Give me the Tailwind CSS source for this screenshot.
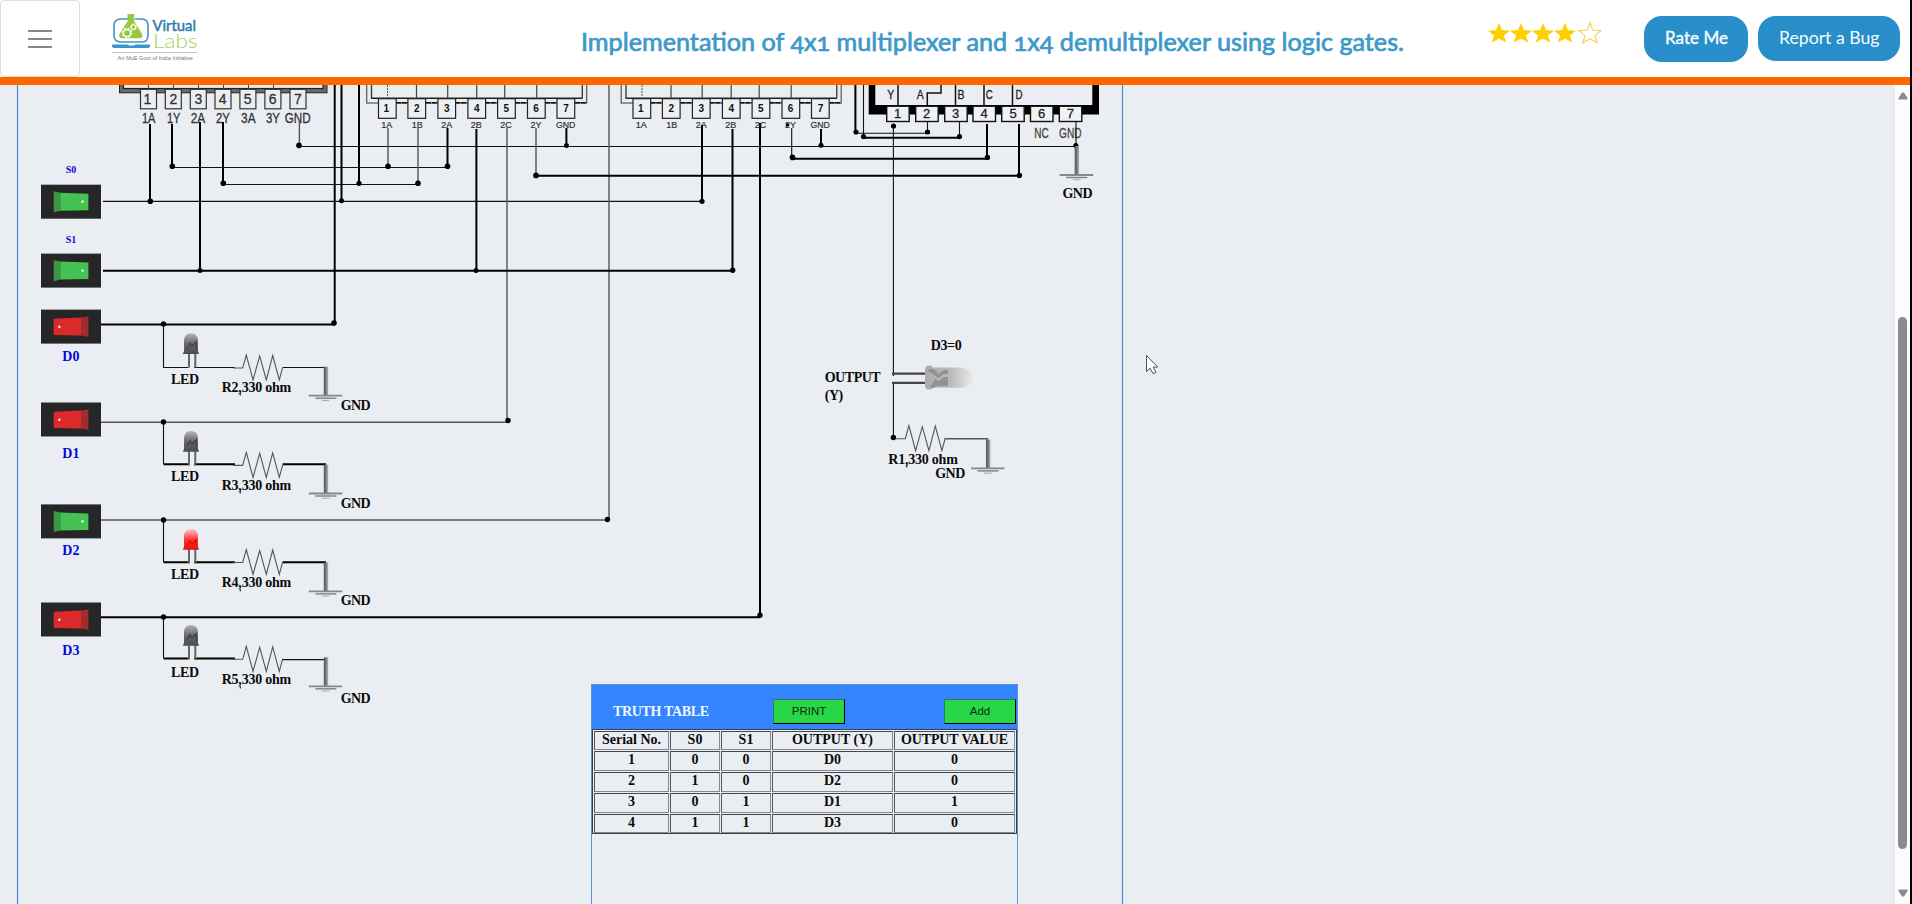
<!DOCTYPE html>
<html lang="en">
<head>
<meta charset="utf-8">
<title>Virtual Labs</title>
<script src="https://cdn.jsdelivr.net/npm/@tailwindcss/browser@4"></script>
</head>
<body class="bg-black">
<div class="flex h-[904px] w-[1910px] flex-col overflow-hidden bg-[#eaeef3]">
  <header class="flex h-[85px] shrink-0 items-start border-b-8 border-[#ff6600] bg-white">
    <button class="flex h-[77px] w-20 flex-col items-center justify-center gap-1.5 rounded border border-[#dedede]">
      <span class="h-0.5 w-6 bg-[#858585]"></span><span class="h-0.5 w-6 bg-[#858585]"></span><span class="h-0.5 w-6 bg-[#858585]"></span>
    </button>
    <svg class="ml-8 h-[77px] w-[88px]" viewBox="112 0 88 77">
      <path d="M128 19h-7q-7 0-7 7v9q0 7 7 7h21q6 0 6-7v-9q0-7-6-7h-7" fill="none" stroke="#3b95c8" stroke-width="1.6"/>
      <path d="M112 44.500h16l1 1h5l1-1h15v1.500q0 2-3 2h-32q-3 0-3-2z" fill="#3b95c8"/>
      <path d="M127.500 14h6.800v7.500l7.500 12q2 4.800-2.500 4.800h-17q-4.500 0-2.500-4.800l7.700-12z" fill="#96ca3c"/>
      <circle cx="127" cy="33" r="3.600" fill="none" stroke="#fff" stroke-width="1.500"/>
      <circle cx="127" cy="33" r="4.700" fill="none" stroke="#fff" stroke-width="1.300" stroke-dasharray="1.700 2"/>
      <circle cx="133.500" cy="27" r="2.200" fill="none" stroke="#fff" stroke-width="1.100"/>
      <circle cx="133.500" cy="27" r="3.100" fill="none" stroke="#fff" stroke-width=".9" stroke-dasharray="1.200 1.200"/>
      <text x="152.500" y="31.300" font-family="Lato, sans-serif" font-size="15.500" fill="#2f7bb0" stroke="#2f7bb0" stroke-width=".5" textLength="43.500" lengthAdjust="spacingAndGlyphs">Virtual</text>
      <text x="153" y="48" font-family="Lato, sans-serif" font-weight="300" font-size="20" fill="#a5d25c" textLength="44.500" lengthAdjust="spacingAndGlyphs">Labs</text>
      <path d="M112 52.500h85" stroke="#c4c4c4"/>
      <text x="117.500" y="59.700" font-family="Liberation Sans, sans-serif" font-size="6" fill="#777" textLength="75.500" lengthAdjust="spacingAndGlyphs">An MoE Govt of India Initiative</text>
    </svg>
    <h1 class="ml-[381px] h-[77px] w-[822px]">
      <svg class="h-[77px] w-[830px] oldstyle-nums" viewBox="0 0 830 77"><text x="0" y="50.500" font-family="Lato, sans-serif" font-size="24.500" fill="#3d99c9" stroke="#3d99c9" stroke-width=".7" textLength="823" lengthAdjust="spacingAndGlyphs">Implementation of 4x1 multiplexer and 1x4 demultiplexer using logic gates.</text></svg>
    </h1>
    <svg class="ml-[85px] h-[77px] w-[116px]" viewBox="1488 0 116 77">
      <defs><path id="star" d="M0-11.200 2.900-3.900 11-3.200 4.900 1.600 7.200 8.600 0 4.800-7.200 8.600-4.900 1.600-11-3.200-2.900-3.900z"/></defs>
      <g fill="#ffd000"><use href="#star" x="1499" y="34"/><use href="#star" x="1521" y="34"/><use href="#star" x="1543" y="34"/><use href="#star" x="1565" y="34"/></g>
      <use href="#star" x="1590" y="34" fill="#fff" stroke="#f5cf52" stroke-width="1.100"/>
    </svg>
    <button class="ml-10 mt-4 h-[46px] w-[104px] rounded-[18px] bg-[#288ec9]">
      <svg class="h-[46px] w-[104px]" viewBox="0 0 104 46"><text x="21" y="28" font-family="Lato, sans-serif" font-size="17" fill="#f4fbff" stroke="#f4fbff" stroke-width=".4" textLength="63" lengthAdjust="spacingAndGlyphs">Rate Me</text></svg>
    </button>
    <button class="ml-2.5 mt-4 h-[45px] w-[142px] rounded-[18px] bg-[#288ec9]">
      <svg class="h-[45px] w-[142px]" viewBox="0 0 142 45"><text x="21" y="28" font-family="Lato, sans-serif" font-size="17" fill="#f4fbff" textLength="100.500" lengthAdjust="spacingAndGlyphs">Report a Bug</text></svg>
    </button>
  </header>

  <main class="flex h-[819px]">
    <div class="grid h-[819px] w-[1895px] grid-cols-1 grid-rows-1">
      <svg class="col-start-1 row-start-1 h-[819px] w-[1895px]" viewBox="0 85 1895 819">
        <defs>
          <linearGradient id="offDome" x1="0" y1="0" x2="0" y2="1"><stop offset="0" stop-color="#b5b5b5"/><stop offset=".5" stop-color="#686868"/><stop offset="1" stop-color="#4c4c4c"/></linearGradient>
          <linearGradient id="onDome" x1="0" y1="0" x2="0" y2="1"><stop offset="0" stop-color="#ffc5c5"/><stop offset=".5" stop-color="#ff3a3a"/><stop offset="1" stop-color="#ee0a0a"/></linearGradient>
          <linearGradient id="bar" x1="0" y1="0" x2="1" y2="0"><stop offset="0" stop-color="#555"/><stop offset=".5" stop-color="#777"/><stop offset="1" stop-color="#b4b6b9"/></linearGradient>
          <linearGradient id="lens" x1="0" y1="0" x2="1" y2="0"><stop offset="0" stop-color="#acacac"/><stop offset=".55" stop-color="#bcbcbc"/><stop offset=".85" stop-color="#dcdcdc"/><stop offset="1" stop-color="#e8eaed"/></linearGradient>
          <g id="swOn">
            <rect width="60" height="34" fill="#262626"/>
            <path d="M12.700 6.600 19.500 8v18l-6.800 1.600z" fill="#3b9646"/>
            <path d="M19.300 8 47.400 9v16.500L19.300 26z" fill="#44c253"/><circle cx="41.500" cy="17" r="1.400" fill="#c9f5cf"/>
          </g>
          <g id="swOff">
            <rect width="60" height="34" fill="#262626"/>
            <path d="M40 8 47.400 7v20.500L40 26z" fill="#a02c2e"/>
            <path d="M12.700 9.200 40 8v18l-27.300-.5z" fill="#dc292b"/><circle cx="18.300" cy="17.300" r="1.400" fill="#ffd3d3"/>
          </g>
          <g id="legs" fill="none" stroke="#666" stroke-width="2"><path d="M189 20v14.500M195.300 20v14.500"/></g>
          <g id="ledOff"><use href="#legs"/><path d="M184 18V6q1-6 7-6t7 6v12l1.200 2.700h-16.400z" fill="url(#offDome)"/><path d="M187 15l3-5 2 3 4-4v7" fill="none" stroke="#444" stroke-width="1.500"/></g>
          <g id="ledOn"><use href="#legs"/><path d="M184 18V6q1-6 7-6t7 6v12l1.200 2.700h-16.400z" fill="url(#onDome)"/><path d="M187 16l3-4 2 3 4-4v5" fill="none" stroke="#d00" stroke-width="1.200"/></g>
          <path id="res" d="M233 0h9.700L246.300-13 253 12 259.700-12 266.300 12 272.700-12.500 279.300 12 282.700-.7" fill="none" stroke="#555" stroke-width="1.100"/>
          <g id="gnd">
            <rect x="-2" y="-29" width="4.400" height="29" fill="url(#bar)"/>
            <path d="M-17 0h33.500" stroke="#85878a" stroke-width="1.800"/>
            <path d="M-10.500 2.500h21" stroke="#7d7f82" stroke-width="1.400"/>
            <path d="M-4 4.700h7.500" stroke="#a4a6a9"/>
          </g>
          <g id="ic">
            <rect x="366.700" y="70" width="220" height="33" fill="#e9eef0" stroke="#555" stroke-width="1.200"/>
            <path d="M371.500 80V98M582.300 80V98" stroke="#333" stroke-width="1.300"/>
            <path d="M371 98.200h211.500" stroke="#222" stroke-width="1.500"/>
            <path d="M396 102.700h11M426 102.700h11M455 102.700h12M485 102.700h12M515 102.700h12M545 102.700h11M575 102.700h11" stroke="#111" stroke-width="1.500" stroke-dasharray="5 .8"/>
            <path d="M387.500 85v13" stroke="#555" stroke-dasharray="2 1"/><path d="M416.500 85v13M447.700 85v13M476.700 85v13M504.700 85v13M536.700 85v13" stroke="#444" stroke-width="1.200"/>
            <g fill="#eceff3" stroke="#222" stroke-width="1.200">
              <rect x="378.500" y="98.700" width="17.700" height="19.600"/><rect x="407.900" y="98.700" width="17.700" height="19.600"/><rect x="437.900" y="98.700" width="17.700" height="19.600"/><rect x="467.900" y="98.700" width="17.700" height="19.600"/><rect x="497.600" y="98.700" width="17.700" height="19.600"/><rect x="527.500" y="98.700" width="17.700" height="19.600"/><rect x="557" y="98.700" width="17.700" height="19.600"/>
            </g>
            <g font-family="Liberation Sans, sans-serif" font-weight="700" font-size="10" fill="#111" text-anchor="middle">
              <text x="386.300" y="112">1</text><text x="416.700" y="112">2</text><text x="446.700" y="112">3</text><text x="476.700" y="112">4</text><text x="506.300" y="112">5</text><text x="536" y="112">6</text><text x="566" y="112">7</text>
            </g>
            <g font-family="Liberation Sans, sans-serif" font-size="9" fill="#333" stroke="#333" stroke-width=".2" text-anchor="middle">
              <text x="386.700" y="128">1A</text><text x="417.300" y="128">1B</text><text x="446.700" y="128">2A</text><text x="476.300" y="128">2B</text><text x="506" y="128">2C</text><text x="536" y="128">2Y</text><text x="565.700" y="128" textLength="19.500" lengthAdjust="spacingAndGlyphs">GND</text>
            </g>
          </g>
        </defs>

        <path d="M17.500 85V904M1122.500 85V904" stroke="#4f8ad0" stroke-width="1.200"/>

        <!-- inverter chip -->
        <rect x="119.500" y="75" width="207.500" height="17.800" fill="#6a6a6a" stroke="#222"/>
        <rect x="123.500" y="75" width="199.500" height="13.500" fill="#eceff2" stroke="#222" stroke-width="1.200"/>
        <path d="M148.500 85v4M173.500 85v4M198.500 85v4M223.500 85v4M248.500 85v4M273.500 85v4" stroke="#444"/>
        <g fill="#eaeef3" stroke="#333" stroke-width="1.200">
          <rect x="140.500" y="89.300" width="16" height="19.500"/><rect x="165.300" y="89.300" width="16" height="19.500"/><rect x="190.300" y="89.300" width="16" height="19.500"/><rect x="215" y="89.300" width="16" height="19.500"/><rect x="239.900" y="89.300" width="16" height="19.500"/><rect x="264.900" y="89.300" width="16" height="19.500"/><rect x="290" y="89.300" width="16" height="19.500"/>
        </g>
        <g font-family="Liberation Sans, sans-serif" font-size="14" fill="#333" stroke="#333" stroke-width=".3" text-anchor="middle">
          <text x="147.500" y="104">1</text><text x="173.300" y="104">2</text><text x="198.500" y="104">3</text><text x="222.700" y="104">4</text><text x="247.700" y="104">5</text><text x="272.700" y="104">6</text><text x="298" y="104">7</text>
          <text x="148.700" y="123.200" textLength="13.500" lengthAdjust="spacingAndGlyphs">1A</text><text x="173.700" y="123.200" textLength="13.500" lengthAdjust="spacingAndGlyphs">1Y</text><text x="198" y="123.200" textLength="14.500" lengthAdjust="spacingAndGlyphs">2A</text><text x="223" y="123.200" textLength="14" lengthAdjust="spacingAndGlyphs">2Y</text><text x="248.300" y="123.200" textLength="14.500" lengthAdjust="spacingAndGlyphs">3A</text><text x="273" y="123.200" textLength="14" lengthAdjust="spacingAndGlyphs">3Y</text><text x="297.700" y="123.200" textLength="26" lengthAdjust="spacingAndGlyphs">GND</text>
        </g>

        <use href="#ic"/>
        <use href="#ic" x="254.500"/>

        <!-- OR gate chip -->
        <rect x="868.700" y="75" width="230.300" height="39.500" fill="#000"/>
        <rect x="875.300" y="75" width="217" height="30" fill="#eaeef3"/>
        <path d="M898 85v20M927.300 105V93H941V85M955.500 85v20M984 85v20M1012.500 85v20" fill="none" stroke="#111" stroke-width="1.500"/>
        <g fill="#eff1f4" stroke="#111" stroke-width="1.400">
          <rect x="886.700" y="106.200" width="22.500" height="15.300"/><rect x="915.700" y="106.200" width="22.500" height="15.300"/><rect x="944.700" y="106.200" width="22.500" height="15.300"/><rect x="973" y="106.200" width="22.500" height="15.300"/><rect x="1001.700" y="106.200" width="22.500" height="15.300"/><rect x="1030.500" y="106.200" width="22.500" height="15.300"/><rect x="1059.300" y="106.200" width="22.500" height="15.300"/>
        </g>
        <g font-family="Liberation Sans, sans-serif" font-size="13" fill="#222" stroke="#222" stroke-width=".3" text-anchor="middle">
          <text x="897.700" y="118.300">1</text><text x="926.700" y="118.300">2</text><text x="955.700" y="118.300">3</text><text x="984" y="118.300">4</text><text x="1013" y="118.300">5</text><text x="1041.700" y="118.300">6</text><text x="1070.300" y="118.300">7</text>
          <text x="890.700" y="99.300" textLength="7" lengthAdjust="spacingAndGlyphs">Y</text><text x="920.300" y="99.300" textLength="7" lengthAdjust="spacingAndGlyphs">A</text><text x="961" y="99.300" textLength="7" lengthAdjust="spacingAndGlyphs">B</text><text x="989.300" y="99.300" textLength="7" lengthAdjust="spacingAndGlyphs">C</text><text x="1019" y="99.300" textLength="7" lengthAdjust="spacingAndGlyphs">D</text>
          <g font-size="14" fill="#444" stroke="#444"><text x="1041.500" y="138" textLength="14.500" lengthAdjust="spacingAndGlyphs">NC</text><text x="1070.300" y="138" textLength="22.500" lengthAdjust="spacingAndGlyphs">GND</text></g>
        </g>

        <!-- thin wires -->
        <path fill="none" stroke="#111" stroke-width="1.100" d="M172 167.500H447.500M223 184.500H418M299 146.500H1076M103 201.400H702M163.500 324V367.500H188M163.500 422V464M163.500 520V562M163.500 617V658M194 367.500H235M282.700 367.500H326M282.700 659.600H326M893.400 126V376M893.400 382V438M856 133.300H927.500M927.500 122V132M863.500 85V137M959.500 122V137M1076 122V146M791.700 128V157"/>
        <path fill="none" stroke="#555" stroke-width="1.400" d="M299.400 120V145M388 128V166M418 128V183M507 128V422M536 128V175M609 85V520M101 422.200H508M101 520H608M945 438.700H988"/>
        <!-- heavy wires -->
        <path fill="none" stroke="#000" stroke-width="2" d="M150 124V201M172 124V167M200 122V271M223 122V184M334.700 85V324M341.500 85V201M359 85V184M103 270.700H733M101 324.500H335M447.500 128V166M476.400 129V271M566.400 128V145M536 175.700H1019M702 125V201M732.500 129V271M760 123V616M792 158.700H987M821 129V145M855.400 85V132M863.500 137.700H959.500M987 124V158M1019 124V176M101 617.200H760M163.500 464.300H188M194 464.300H235M282.700 464.300H326M163.500 562.200H188M194 562.200H235M282.700 562.200H326M163.500 658.400H188M194 658.400H235"/>
        <g fill="#000">
          <circle cx="150.300" cy="201.300" r="2.800"/><circle cx="172.300" cy="166.300" r="2.800"/><circle cx="200" cy="270.600" r="2.500"/><circle cx="223.300" cy="183.300" r="2.800"/><circle cx="299" cy="145.400" r="2.800"/><circle cx="341.500" cy="200.800" r="2.500"/><circle cx="359" cy="183.300" r="2.600"/><circle cx="334" cy="323" r="2.800"/><circle cx="163.500" cy="324" r="2.700"/><circle cx="163.500" cy="422" r="2.700"/><circle cx="163.500" cy="520" r="2.700"/><circle cx="163.500" cy="617" r="2.700"/>
          <circle cx="388" cy="166.300" r="2.800"/><circle cx="418" cy="183.300" r="2.800"/><circle cx="447.500" cy="166.300" r="2.800"/><circle cx="476" cy="270.500" r="2.500"/><circle cx="508" cy="420.500" r="2.700"/><circle cx="536" cy="175.400" r="2.800"/><circle cx="566.500" cy="145.400" r="2.500"/><circle cx="607.500" cy="519.500" r="2.700"/>
          <circle cx="702" cy="201.300" r="2.600"/><circle cx="732.700" cy="270.300" r="2.700"/><circle cx="760" cy="615.300" r="2.700"/><circle cx="792.500" cy="157.400" r="2.800"/><circle cx="821" cy="145.300" r="2.500"/><circle cx="787.500" cy="125" r="1.800"/>
          <circle cx="856" cy="132" r="2.600"/><circle cx="863.500" cy="136.600" r="2.600"/><circle cx="927.500" cy="132" r="2.600"/><circle cx="959.500" cy="136.600" r="2.600"/><circle cx="893.500" cy="126" r="2.600"/><circle cx="987.400" cy="157.400" r="2.700"/><circle cx="1019.400" cy="175.400" r="2.700"/><circle cx="1075.800" cy="145.400" r="2.500"/><circle cx="893.400" cy="437.500" r="2.700"/>
        </g>

        <use href="#swOn" x="41" y="184.700"/><use href="#swOn" x="41" y="253.600"/><use href="#swOff" x="41" y="309.600"/><use href="#swOff" x="41" y="402.500"/><use href="#swOn" x="41" y="504.400"/><use href="#swOff" x="41" y="602.500"/>
        <use href="#ledOff" y="333.300"/><use href="#ledOff" y="431"/><use href="#ledOn" y="529"/><use href="#ledOff" y="625"/>
        <use href="#res" y="368"/><use href="#res" y="465.400"/><use href="#res" y="562.500"/><use href="#res" y="659.300"/><use href="#res" x="662.600" y="438.700"/>
        <use href="#gnd" x="325.800" y="395.700"/><use href="#gnd" x="325.800" y="493.500"/><use href="#gnd" x="325.800" y="591.400"/><use href="#gnd" x="325.800" y="686.300"/><use href="#gnd" x="988" y="468.400"/><use href="#gnd" x="1076.700" y="175"/>

        <!-- output LED -->
        <path d="M892 373.700h34M892 382.800h34" stroke="#444" stroke-width="2.200"/>
        <path d="M925 368l2-2.500h4l2 2h28q12.500 2 12.500 10.200T961 387.800h-28l-2 1.700h-4l-2-2.500z" fill="url(#lens)"/>
        <path d="M929 369h5l5 5 5-4h4v4h-4l-6 4-5-4-5-3zM930 387l5-8 4 2 5-4h4v9h-12l-3 2z" fill="#929292"/>

        <g font-family="Liberation Serif, serif" font-weight="700" font-size="14" fill="#0a0a0a">
          <g fill="#0808d8">
            <g font-size="10"><text x="65.700" y="172.700">S0</text><text x="65.700" y="242.700">S1</text></g>
            <text x="62.300" y="360.700">D0</text><text x="62.300" y="457.700">D1</text><text x="62.300" y="554.700">D2</text><text x="62.300" y="654.700">D3</text>
          </g>
          <text x="171" y="383.700" textLength="28">LED</text><text x="171" y="480.700" textLength="28">LED</text><text x="171" y="578.700" textLength="28">LED</text><text x="171" y="676.700" textLength="28">LED</text>
          <text x="221.700" y="391.700" textLength="69.500">R2,330 ohm</text><text x="221.700" y="489.700" textLength="69.500">R3,330 ohm</text><text x="221.700" y="587.400" textLength="69.500">R4,330 ohm</text><text x="221.700" y="684.400" textLength="69.500">R5,330 ohm</text><text x="888.300" y="463.700" textLength="69.500">R1,330 ohm</text>
          <text x="340.700" y="410.400" textLength="30">GND</text><text x="340.700" y="508.400" textLength="30">GND</text><text x="340.700" y="605" textLength="30">GND</text><text x="340.700" y="703.400" textLength="30">GND</text><text x="935.300" y="478.400" textLength="30">GND</text><text x="1062.500" y="197.700" textLength="30">GND</text>
          <text x="824.700" y="381.700" textLength="56">OUTPUT</text><text x="824.700" y="400" textLength="18.500">(Y)</text><text x="930.700" y="349.700" textLength="31">D3=0</text>
        </g>
        <path d="M240.300 393v2.500M240.300 491v2.500M240.300 589v2.500M240.300 686v2.500M906.800 465v2.500" stroke="#333" stroke-width="1.200"/>
        <path d="M1146.500 355.500v16l3.600-3.300 3 5.500 2.800-1.300-2.700-5.300h4.500z" fill="#fff" stroke="#4b4f66"/>
      </svg>

      <section class="z-10 col-start-1 row-start-1 ml-[591px] mt-[599px] flex h-[220px] w-[427px] flex-col border-x border-t border-[#5b93e2] font-['Liberation_Serif',serif] text-[14px] font-bold">
        <div class="flex h-11 shrink-0 items-end bg-[#3385ff] pb-[5px] pr-px">
          <svg class="h-7 w-[181px]" viewBox="0 0 181 28"><text x="21" y="20" font-size="14" fill="#f2f7ff" textLength="96">TRUTH TABLE</text></svg>
          <button class="h-[25px] w-[72px] border border-t-[#3b7769] border-l-[#3b7769] border-r-black border-b-black bg-[#28d748] font-['Liberation_Sans',sans-serif] text-[11.5px] font-normal text-[#0c2c12]">PRINT</button>
          <button class="ml-auto h-[25px] w-[72px] border border-t-[#3b7769] border-l-[#3b7769] border-r-black border-b-black bg-[#28d748] font-['Liberation_Sans',sans-serif] text-[11.5px] font-normal text-[#0c2c12]">Add</button>
        </div>
        <div class="grid h-[105px] shrink-0 grid-cols-[75px_50px_50px_121px_121px] grid-rows-[19px_20px_20px_20px_19px] gap-px border border-[#3c3f44] p-px text-center leading-[15px] text-[#0a0a0a] *:border *:border-t-[#44474c] *:border-l-[#55585c] *:border-r-[#85888c] *:border-b-[#85888c]">
          <div>Serial No.</div><div>S0</div><div>S1</div><div>OUTPUT (Y)</div><div class="whitespace-nowrap tracking-[-0.12px]">OUTPUT VALUE</div>
          <div>1</div><div>0</div><div>0</div><div>D0</div><div>0</div>
          <div>2</div><div>1</div><div>0</div><div>D2</div><div>0</div>
          <div>3</div><div>0</div><div>1</div><div>D1</div><div>1</div>
          <div>4</div><div>1</div><div>1</div><div>D3</div><div>0</div>
        </div>
      </section>
    </div>
    <div class="flex w-[15px] flex-col items-center bg-[#fcfcfc] pt-[7px]">
      <svg class="h-2 w-2.5" viewBox="0 0 10 8"><path d="M4 .5h2L9.500 6v1.500h-9V6z" fill="#8b8b8b"/></svg>
      <div class="mt-[217px] h-[532px] w-[9px] rounded-full bg-[#8b8b8b]"></div>
      <svg class="mt-10 h-2 w-2.5" viewBox="0 0 10 8"><path d="M4 7.500h2L9.500 2V.5h-9V2z" fill="#8b8b8b"/></svg>
    </div>
  </main>
</div>
</body>
</html>
